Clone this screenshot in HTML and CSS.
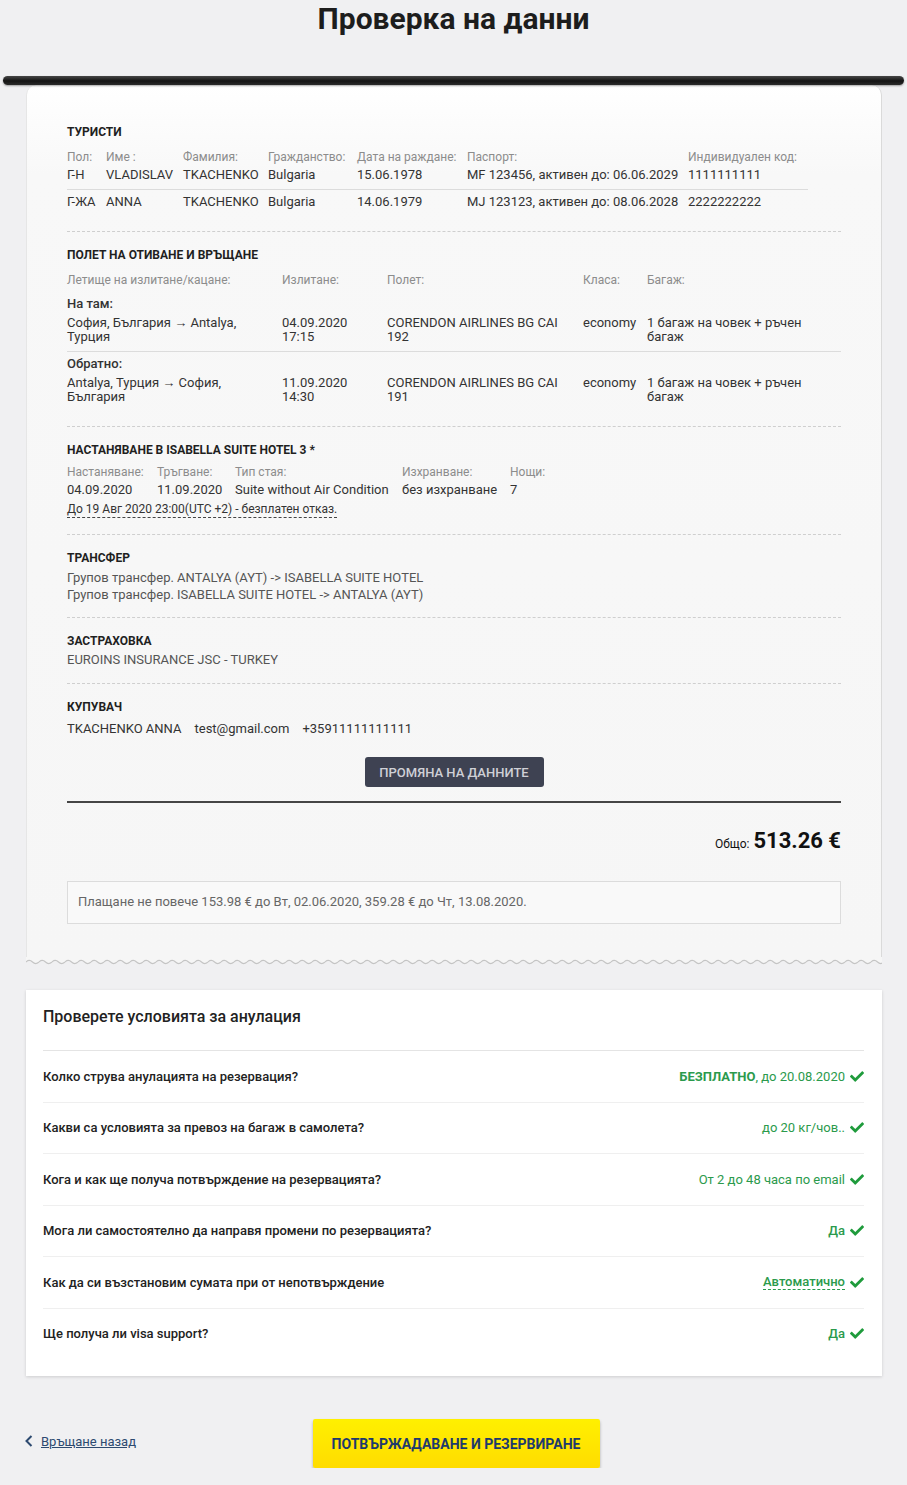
FILE: index.html
```html
<!DOCTYPE html>
<html lang="bg">
<head>
<meta charset="utf-8">
<title>Проверка на данни</title>
<link rel="stylesheet" href="styles.css">
</head>
<body>
<h1 class="page-title">Проверка на данни</h1>
<div class="printer-bar"></div>
<div class="receipt">
  <div class="paper">
    <section class="sec sec-tourists">
      <h3 class="sec-title">Туристи</h3>
      <table class="tourists">
        <colgroup>
          <col class="w39"><col class="w77"><col class="w85"><col class="w89"><col class="w110"><col class="w221"><col class="w120">
        </colgroup>
        <thead>
          <tr><th>Пол:</th><th>Име :</th><th>Фамилия:</th><th>Гражданство:</th><th>Дата на раждане:</th><th>Паспорт:</th><th>Индивидуален код:</th></tr>
        </thead>
        <tbody>
          <tr class="first"><td>Г-Н</td><td>VLADISLAV</td><td>TKACHENKO</td><td>Bulgaria</td><td>15.06.1978</td><td>MF 123456, активен до: 06.06.2029</td><td>1111111111</td></tr>
          <tr class="second"><td>Г-ЖА</td><td>ANNA</td><td>TKACHENKO</td><td>Bulgaria</td><td>14.06.1979</td><td>MJ 123123, активен до: 08.06.2028</td><td>2222222222</td></tr>
        </tbody>
      </table>
    </section>

    <section class="sec sec-flight">
      <h3 class="sec-title">Полет на отиване и връщане</h3>
      <div class="flight-grid labels">
        <div>Летище на излитане/кацане:</div><div>Излитане:</div><div>Полет:</div><div>Класа:</div><div>Багаж:</div>
      </div>
      <div class="leg leg-first">
        <div class="leg-title">На там:</div>
        <div class="flight-grid values">
          <div class="c-route">София, България → Antalya, Турция</div>
          <div class="c-dep"><span>04.09.2020</span><span>17:15</span></div>
          <div class="c-flight">CORENDON AIRLINES BG CAI 192</div>
          <div>economy</div>
          <div class="c-bag">1 багаж на човек + ръчен багаж</div>
        </div>
      </div>
      <div class="leg leg-second">
        <div class="leg-title">Обратно:</div>
        <div class="flight-grid values">
          <div class="c-route">Antalya, Турция → София, България</div>
          <div class="c-dep"><span>11.09.2020</span><span>14:30</span></div>
          <div class="c-flight">CORENDON AIRLINES BG CAI 191</div>
          <div>economy</div>
          <div class="c-bag">1 багаж на човек + ръчен багаж</div>
        </div>
      </div>
    </section>

    <section class="sec sec-hotel">
      <h3 class="sec-title">Настаняване в ISABELLA SUITE HOTEL 3 *</h3>
      <div class="hotel-grid labels">
        <div>Настаняване:</div><div>Тръгване:</div><div>Тип стая:</div><div>Изхранване:</div><div>Нощи:</div>
      </div>
      <div class="hotel-grid values">
        <div>04.09.2020</div><div>11.09.2020</div><div>Suite without Air Condition</div><div>без изхранване</div><div>7</div>
      </div>
      <div class="cancel-note"><span>До 19 Авг 2020 23:00(UTC +2) - безплатен отказ.</span></div>
    </section>

    <section class="sec sec-transfer">
      <h3 class="sec-title">Трансфер</h3>
      <div class="plain-line">Групов трансфер. ANTALYA (AYT) -&gt; ISABELLA SUITE HOTEL</div>
      <div class="plain-line">Групов трансфер. ISABELLA SUITE HOTEL -&gt; ANTALYA (AYT)</div>
    </section>

    <section class="sec sec-insurance">
      <h3 class="sec-title">Застраховка</h3>
      <div class="plain-line">EUROINS INSURANCE JSC - TURKEY</div>
    </section>

    <section class="sec sec-buyer">
      <h3 class="sec-title">Купувач</h3>
      <div class="buyer-line"><span>TKACHENKO ANNA</span><span>test@gmail.com</span><span>+35911111111111</span></div>
    </section>

    <button class="edit-btn" type="button">Промяна на данните</button>
    <hr class="divider">
    <div class="total"><span class="total-label">Общо:</span> <span class="total-amount">513.26 €</span></div>
    <div class="pay-info">Плащане не повече 153.98 € до Вт, 02.06.2020, 359.28 € до Чт, 13.08.2020.</div>
  </div>
  <svg class="wave" width="856" height="10" viewBox="0 0 856 10" aria-hidden="true">
    <defs>
      <pattern id="wv" width="13" height="10" patternUnits="userSpaceOnUse">
        <path d="M0 5 Q3.25 1.8 6.5 5 T13 5 V0 H0 Z" fill="#f6f6f6"/>
        <path d="M0 5 Q3.25 1.8 6.5 5 T13 5" fill="none" stroke="#c4c4c4" stroke-width="1.1"/>
      </pattern>
    </defs>
    <rect width="856" height="10" fill="url(#wv)"/>
  </svg>
</div>

<div class="cancel-card">
  <h2 class="cancel-title">Проверете условията за анулация</h2>
  <div class="q-row">
    <div class="q">Колко струва анулацията на резервация?</div>
    <div class="a"><span><strong>БЕЗПЛАТНО</strong>, до 20.08.2020</span><svg class="check" viewBox="0 60 512 392" width="14" height="11"><path d="M173.898 439.404l-166.4-166.4c-9.997-9.997-9.997-26.206 0-36.204l36.203-36.204c9.997-9.998 26.207-9.998 36.204 0L192 312.69 432.095 72.596c9.997-9.997 26.207-9.997 36.204 0l36.203 36.204c9.997 9.997 9.997 26.206 0 36.204l-294.4 294.401c-9.998 9.997-26.207 9.997-36.204-.001z"/></svg></div>
  </div>
  <div class="q-row">
    <div class="q">Какви са условията за превоз на багаж в самолета?</div>
    <div class="a"><span>до 20 кг/чов..</span><svg class="check" viewBox="0 60 512 392" width="14" height="11"><path d="M173.898 439.404l-166.4-166.4c-9.997-9.997-9.997-26.206 0-36.204l36.203-36.204c9.997-9.998 26.207-9.998 36.204 0L192 312.69 432.095 72.596c9.997-9.997 26.207-9.997 36.204 0l36.203 36.204c9.997 9.997 9.997 26.206 0 36.204l-294.4 294.401c-9.998 9.997-26.207 9.997-36.204-.001z"/></svg></div>
  </div>
  <div class="q-row">
    <div class="q">Кога и как ще получа потвърждение на резервацията?</div>
    <div class="a"><span>От 2 до 48 часа по email</span><svg class="check" viewBox="0 60 512 392" width="14" height="11"><path d="M173.898 439.404l-166.4-166.4c-9.997-9.997-9.997-26.206 0-36.204l36.203-36.204c9.997-9.998 26.207-9.998 36.204 0L192 312.69 432.095 72.596c9.997-9.997 26.207-9.997 36.204 0l36.203 36.204c9.997 9.997 9.997 26.206 0 36.204l-294.4 294.401c-9.998 9.997-26.207 9.997-36.204-.001z"/></svg></div>
  </div>
  <div class="q-row">
    <div class="q">Мога ли самостоятелно да направя промени по резервацията?</div>
    <div class="a"><span class="med">Да</span><svg class="check" viewBox="0 60 512 392" width="14" height="11"><path d="M173.898 439.404l-166.4-166.4c-9.997-9.997-9.997-26.206 0-36.204l36.203-36.204c9.997-9.998 26.207-9.998 36.204 0L192 312.69 432.095 72.596c9.997-9.997 26.207-9.997 36.204 0l36.203 36.204c9.997 9.997 9.997 26.206 0 36.204l-294.4 294.401c-9.998 9.997-26.207 9.997-36.204-.001z"/></svg></div>
  </div>
  <div class="q-row">
    <div class="q">Как да си възстановим сумата при от непотвърждение</div>
    <div class="a"><span class="med dotted">Автоматично</span><svg class="check" viewBox="0 60 512 392" width="14" height="11"><path d="M173.898 439.404l-166.4-166.4c-9.997-9.997-9.997-26.206 0-36.204l36.203-36.204c9.997-9.998 26.207-9.998 36.204 0L192 312.69 432.095 72.596c9.997-9.997 26.207-9.997 36.204 0l36.203 36.204c9.997 9.997 9.997 26.206 0 36.204l-294.4 294.401c-9.998 9.997-26.207 9.997-36.204-.001z"/></svg></div>
  </div>
  <div class="q-row last">
    <div class="q">Ще получа ли visa support?</div>
    <div class="a"><span class="med">Да</span><svg class="check" viewBox="0 60 512 392" width="14" height="11"><path d="M173.898 439.404l-166.4-166.4c-9.997-9.997-9.997-26.206 0-36.204l36.203-36.204c9.997-9.998 26.207-9.998 36.204 0L192 312.69 432.095 72.596c9.997-9.997 26.207-9.997 36.204 0l36.203 36.204c9.997 9.997 9.997 26.206 0 36.204l-294.4 294.401c-9.998 9.997-26.207 9.997-36.204-.001z"/></svg></div>
  </div>
</div>

<div class="actions">
  <a class="back-link" href="#"><svg class="chev" width="8" height="12" viewBox="0 0 8 12"><polyline points="6.5,1 1.5,6 6.5,11" fill="none" stroke="#2d4a70" stroke-width="2"/></svg><span>Връщане назад</span></a>
  <button class="confirm-btn" type="button">Потвържадаване и резервиране</button>
  <div></div>
</div>
</body>
</html>
```

FILE: styles.css
```css
* { box-sizing: border-box; }

body {
  margin: 0;
  background: #f0f0f2;
  font-family: Roboto, "Noto Sans", Arial, sans-serif;
  color: #333;
}

.page-title {
  margin: 0;
  text-align: center;
  font-size: 30px;
  line-height: 38px;
  font-weight: 700;
  color: #1d1d1d;
}

.printer-bar {
  position: relative;
  z-index: 2;
  margin: 38px 3px 0;
  height: 9px;
  border-radius: 5px;
  background: linear-gradient(#474747, #141414 55%, #2a2a2a);
  box-shadow: 0 1px 2px rgba(0, 0, 0, .35);
}

.receipt {
  margin: 0 25px 0 26px;
}

.paper {
  background: linear-gradient(180deg, #ffffff 0, #f8f8f8 90px, #f6f6f6 100%);
  border-left: 1px solid #e6e6e6;
  border-right: 1px solid #dadada;
  border-radius: 10px 10px 0 0;
  padding: 39px 40px 33px;
}

.wave { display: block; }

.sec {
  border-bottom: 1px dashed #cfcfcf;
  padding-top: 15px;
}

.sec-tourists { padding-top: 0; padding-bottom: 20px; }
.sec-flight { padding-bottom: 22px; }
.sec-hotel { padding-bottom: 16px; }
.sec-transfer { padding-bottom: 14px; }
.sec-insurance { padding-bottom: 15px; }
.sec-buyer { border-bottom: 0; }

.sec-title {
  margin: 0 0 8px;
  font-size: 12px;
  line-height: 16px;
  font-weight: 700;
  text-transform: uppercase;
  color: #1f1f1f;
}

.sec-hotel .sec-title,
.sec-buyer .sec-title { margin-bottom: 5px; }
.sec-transfer .sec-title { margin-bottom: 3px; }
.sec-insurance .sec-title { margin-bottom: 2px; }

/* tourists */
.tourists {
  border-collapse: collapse;
  table-layout: fixed;
  width: 741px;
}
.w39 { width: 39px; }
.w77 { width: 77px; }
.w85 { width: 85px; }
.w89 { width: 89px; }
.w110 { width: 110px; }
.w221 { width: 221px; }
.w120 { width: 120px; }

.tourists th {
  padding: 0;
  text-align: left;
  font-weight: 400;
  font-size: 12px;
  line-height: 18px;
  color: #8c8c8c;
  white-space: nowrap;
}
.tourists td {
  padding: 0;
  font-size: 13px;
  line-height: 18px;
  color: #333;
  white-space: nowrap;
}
.tourists tr.first td {
  padding-bottom: 5px;
  border-bottom: 1px solid #dcdcdc;
}
.tourists tr.second td { padding-top: 3px; }

.labels {
  font-size: 12px;
  line-height: 18px;
  color: #8c8c8c;
}
.values {
  font-size: 13px;
  color: #333;
}

/* flight */
.flight-grid {
  display: grid;
  grid-template-columns: 215px 105px 196px 64px 1fr;
}
.flight-grid.values { line-height: 14px; margin-top: 3px; }
.leg-title {
  margin-top: 6px;
  font-size: 13px;
  line-height: 18px;
  font-weight: 500;
  color: #333;
}
.leg-first {
  padding-bottom: 7px;
  border-bottom: 1px solid #dcdcdc;
}
.leg-second { padding-top: 3px; }
.leg-second .leg-title { margin-top: 0; }
.c-route { padding-right: 15px; }
.c-dep span { display: block; }
.c-flight { padding-right: 16px; }
.c-bag { max-width: 175px; }

/* hotel */
.hotel-grid {
  display: grid;
  grid-template-columns: 90px 78px 167px 108px 1fr;
}
.hotel-grid.values { line-height: 18px; }
.cancel-note {
  margin-top: 2px;
  font-size: 12px;
  line-height: 16px;
  color: #333;
}
.cancel-note span {
  display: inline-block;
  border-bottom: 1px dashed #444;
}

.plain-line {
  font-size: 13px;
  line-height: 17px;
  color: #555;
}

.buyer-line {
  display: flex;
  gap: 13px;
  font-size: 13px;
  line-height: 18px;
  color: #333;
}

.edit-btn {
  display: block;
  margin: 19px auto 0;
  width: 179px;
  height: 30px;
  border: 0;
  border-radius: 3px;
  background: #3e4252;
  color: #cfd0d6;
  font-family: inherit;
  font-size: 13px;
  font-weight: 500;
  text-transform: uppercase;
}

.divider {
  margin: 14px 0 0;
  border: 0;
  height: 2px;
  background: #454545;
}

.total {
  margin-top: 23px;
  text-align: right;
  line-height: 30px;
  color: #111;
}
.total-label { font-size: 12px; }
.total-amount { font-size: 22px; font-weight: 700; }

.pay-info {
  margin-top: 22px;
  border: 1px solid #dcdcdc;
  background: #f9f9f9;
  padding: 11px 10px 12px;
  font-size: 13px;
  line-height: 18px;
  color: #666;
}

/* cancellation */
.cancel-card {
  margin: 23px 25px 0 26px;
  background: #fff;
  box-shadow: 0 1px 3px rgba(0, 0, 0, .15);
  padding: 16px 18px 17px 17px;
}
.cancel-title {
  margin: 0;
  padding-bottom: 22px;
  border-bottom: 1px solid #e4e4e4;
  font-size: 16px;
  line-height: 22px;
  font-weight: 500;
  color: #222;
}
.q-row {
  display: flex;
  justify-content: space-between;
  align-items: center;
  height: 51.5px;
  border-bottom: 1px solid #efefef;
}
.q-row.last { border-bottom: 0; height: 50.5px; }
.q {
  font-size: 13px;
  font-weight: 500;
  color: #222;
}
.a {
  display: flex;
  align-items: center;
  gap: 5px;
  font-size: 13px;
  color: #2b9a4c;
}
.a strong { font-weight: 700; }
.a .med { font-weight: 500; }
.a .dotted { border-bottom: 1px dashed #2b9a4c; line-height: 15px; }
.check { fill: #1f9b3c; display: block; }

/* actions */
.actions {
  display: grid;
  grid-template-columns: 1fr auto 1fr;
  align-items: center;
  margin: 43px 20px 0 25px;
}
.back-link {
  justify-self: start;
  display: inline-flex;
  align-items: center;
  gap: 8px;
  margin-bottom: 5px;
  color: #2d4a70;
  font-size: 13px;
  text-decoration: none;
}
.back-link span { text-decoration: underline; }
.chev { display: block; }

.confirm-btn {
  width: 287px;
  height: 49px;
  border: 0;
  border-radius: 2px;
  background: linear-gradient(#fff000, #ffdc00);
  box-shadow: 0 2px 3px rgba(0, 0, 0, .3);
  color: #1e3a6d;
  font-family: inherit;
  font-size: 14px;
  font-weight: 700;
  text-transform: uppercase;
}
```
